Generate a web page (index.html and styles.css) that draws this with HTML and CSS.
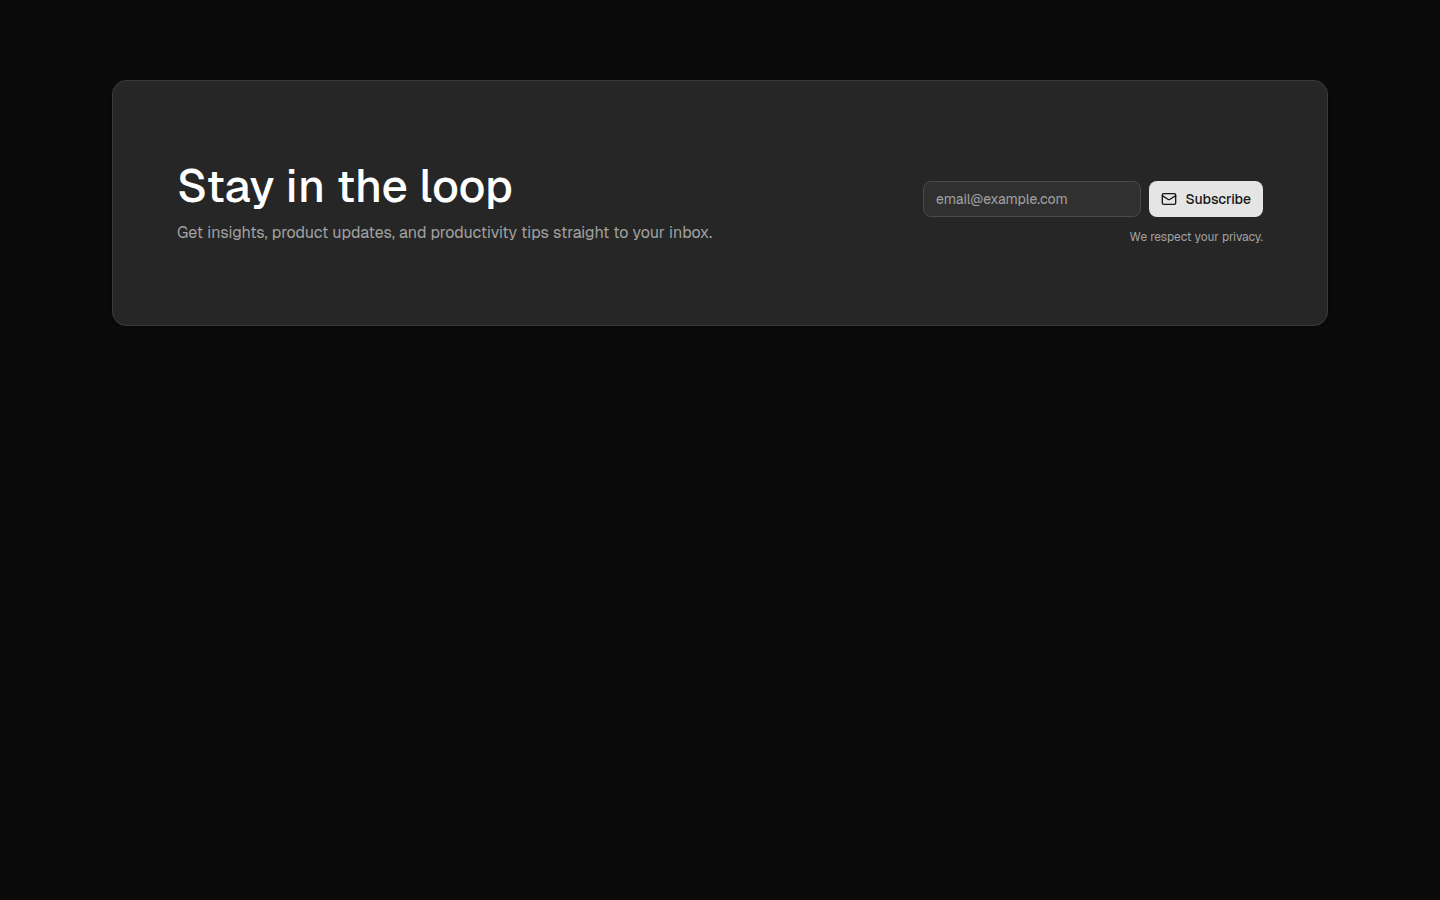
FILE: index.html
```html
<!DOCTYPE html>
<html lang="en">
<head>
<meta charset="utf-8">
<meta name="viewport" content="width=device-width, initial-scale=1">
<title>Stay in the loop</title>
<link rel="stylesheet" href="styles.css">
</head>
<body>
<main class="page">
  <section class="card">
    <div class="intro">
      <h2 class="title">Stay in the loop</h2>
      <p class="lead">Get insights, product updates, and productivity tips straight to your inbox.</p>
    </div>
    <form class="signup">
      <div class="fields">
        <input class="email" type="email" placeholder="email@example.com" aria-label="Email address">
        <button class="subscribe" type="submit">
          <svg class="icon" viewBox="0 0 24 24" fill="none" stroke="currentColor" stroke-width="2" stroke-linecap="round" stroke-linejoin="round" aria-hidden="true">
            <rect x="2" y="4" width="20" height="16" rx="2"/>
            <path d="m22 7-8.97 5.7a1.94 1.94 0 0 1-2.06 0L2 7"/>
          </svg>
          Subscribe
        </button>
      </div>
      <p class="note">We respect your privacy.</p>
    </form>
  </section>
</main>
</body>
</html>
```

FILE: styles.css
```css
* {
  box-sizing: border-box;
}

body {
  margin: 0;
  background: #0a0a0a;
  color: #fafafa;
  font-family: Geist, Inter, "Liberation Sans", sans-serif;
}

h2,
p {
  margin: 0;
}

.page {
  max-width: 1280px;
  margin: 0 auto;
  padding: 80px 32px;
}

.card {
  display: flex;
  flex-wrap: wrap;
  align-items: flex-end;
  justify-content: space-between;
  gap: 32px;
  padding: 80px 64px;
  border: 1px solid #3a3a3a;
  border-radius: 14px;
  background: #262626;
  box-shadow: 0 1px 3px rgba(0, 0, 0, 0.1), 0 1px 2px rgba(0, 0, 0, 0.1);
}

.intro {
  display: flex;
  flex-direction: column;
  gap: 10px;
}

.title {
  font-size: 46px;
  font-weight: 500;
  line-height: 50px;
  color: #fff;
}

.lead {
  font-size: 16px;
  line-height: 24px;
  color: #a1a1a1;
}

.signup {
  display: flex;
  flex-direction: column;
  gap: 12px;
  width: 340px;
}

.fields {
  display: flex;
  gap: 8px;
}

.email {
  flex: 1;
  min-width: 0;
  height: 36px;
  padding: 0 12px;
  border: 1px solid #4a4a4a;
  border-radius: 8px;
  background: #303030;
  color: #fafafa;
  font: inherit;
  font-size: 14px;
}

.email::placeholder {
  color: #a1a1a1;
  opacity: 1;
}

.subscribe {
  display: flex;
  align-items: center;
  gap: 8px;
  height: 36px;
  padding: 0 12px;
  border: 0;
  border-radius: 8px;
  background: #e5e5e5;
  color: #171717;
  font: inherit;
  font-size: 14px;
  font-weight: 500;
}

.icon {
  width: 16px;
  height: 16px;
}

.note {
  font-size: 12px;
  line-height: 16px;
  text-align: right;
  color: #a1a1a1;
}
```
